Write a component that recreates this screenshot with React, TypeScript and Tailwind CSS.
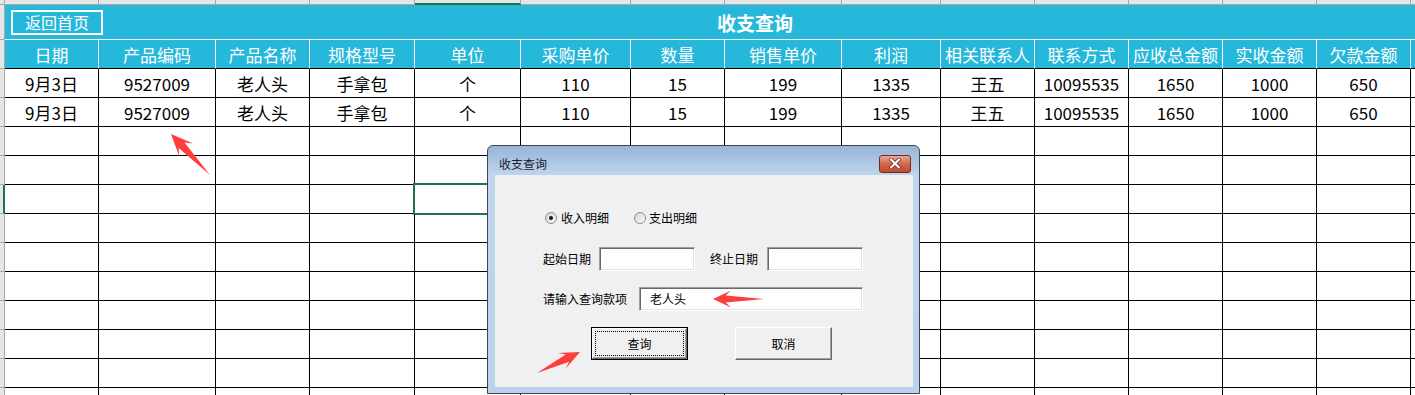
import React from 'react';

const GRID =
  'grid grid-cols-[94px_117px_94px_105px_106px_110px_94px_117px_99px_94px_94px_94px_94px_94px_4px]';

const HEADERS = ['日期', '产品编码', '产品名称', '规格型号', '单位', '采购单价', '数量', '销售单价', '利润', '相关联系人', '联系方式', '应收总金额', '实收金额', '欠款金额'];
const ROW = ['9月3日', '9527009', '老人头', '手拿包', '个', '110', '15', '199', '1335', '王五', '10095535', '1650', '1000', '650'];

const DATA: string[][] = [ROW, ROW, ...Array.from({ length: 10 }, () => Array(14).fill(''))];

// red screenshot arrow, tail -> tip
function arrowPoints(x1: number, y1: number, x2: number, y2: number, hl: number, hh: number, nh: number) {
  const dx = x2 - x1;
  const dy = y2 - y1;
  const len = Math.hypot(dx, dy);
  const ux = dx / len;
  const uy = dy / len;
  const px = -uy;
  const py = ux;
  const at = (u: number, v: number) => `${(x1 + ux * u + px * v).toFixed(1)},${(y1 + uy * u + py * v).toFixed(1)}`;
  return [at(0, 0), at(len - hl * 0.7, nh), at(len - hl, hh), at(len, 0), at(len - hl, -hh), at(len - hl * 0.7, -nh)].join(' ');
}

const RowHead = ({ active = false }: { active?: boolean }) => (
  <div
    className={`w-[5px] shrink-0 bg-[#e6e6e6] border-b border-b-[#a8a8a8] ${
      active ? 'border-r-2 border-r-[#217346]' : 'border-r border-r-[#a8a8a8]'
    }`}
  />
);

const Radio = ({ checked }: { checked: boolean }) => (
  <div className="w-[12px] h-[12px] rounded-full border border-[#8e8f8f] bg-linear-to-br from-[#d4d4d4] to-[#fcfcfc] flex items-center justify-center">
    {checked && <div className="w-[4px] h-[4px] rounded-full bg-[#151515]" />}
  </div>
);

const Field = ({ className, children }: { className: string; children?: React.ReactNode }) => (
  <div
    className={`h-[24px] bg-white border border-t-[#a0a0a0] border-l-[#a0a0a0] border-r-white border-b-white shadow-[inset_1px_1px_0_#696969,inset_-1px_-1px_0_#e3e3e3] flex items-center ${className}`}
  >
    {children}
  </div>
);

const Dialog = () => (
  <div className="absolute left-[487px] top-[145px] w-[433px] h-[249px] rounded-t-[6px] border border-[#3b4656] bg-linear-to-b from-[#98b4d6] via-[#c0d6ee] via-[12%] to-[#bad2ec] flex flex-col pl-[7px] pr-[6px] pb-[6px]">
    <div className="h-[29px] pt-[6px] flex items-center justify-between pl-[4px] pr-[2px]">
      <span className="text-[12px] leading-none text-[#1b2330]">收支查询</span>
      <div className="w-[32px] h-[18px] rounded-[3px] border border-[#6e2b1f] bg-linear-to-b from-[#e9a795] via-[#d2664c] via-[50%] to-[#c34a2e] flex items-center justify-center">
        <svg width="14" height="11" viewBox="0 0 14 11">
          <path d="M3 1.5 L11 9.5 M11 1.5 L3 9.5" stroke="#5a2218" strokeWidth="3.6" strokeLinecap="round" />
          <path d="M3 1.5 L11 9.5 M11 1.5 L3 9.5" stroke="#ffffff" strokeWidth="2.2" strokeLinecap="round" />
        </svg>
      </div>
    </div>

    <div className="flex-1 bg-[#f0f0f0] pl-[48px] pt-[35px] flex flex-col text-[12px] leading-none text-black">
      <div className="h-[16px] ml-[2px] flex items-center">
        <Radio checked />
        <span className="ml-[4px]">收入明细</span>
        <div className="ml-[25px]">
          <Radio checked={false} />
        </div>
        <span className="ml-[3px]">支出明细</span>
      </div>

      <div className="mt-[21px] h-[24px] flex items-center">
        <span>起始日期</span>
        <Field className="ml-[8px] w-[96px]" />
        <span className="ml-[15px]">终止日期</span>
        <Field className="ml-[9px] w-[96px]" />
      </div>

      <div className="mt-[16px] h-[24px] flex items-center">
        <span>请输入查询款项</span>
        <Field className="ml-[12px] w-[224px] pl-[10px]">
          <span>老人头</span>
        </Field>
      </div>

      <div className="mt-[16px] h-[33px] flex">
        <div className="ml-[48px] w-[97px] h-[33px] border border-black">
          <div className="h-full bg-[#f0f0f0] border border-t-white border-l-white border-r-[#696969] border-b-[#696969] shadow-[inset_-1px_-1px_0_#a0a0a0] p-[2px]">
            <div className="h-full border border-dotted border-black flex items-center justify-center">查询</div>
          </div>
        </div>
        <div className="ml-[47px] w-[97px] h-[33px] bg-[#f0f0f0] border border-t-white border-l-white border-r-[#696969] border-b-[#696969] shadow-[inset_-1px_-1px_0_#a0a0a0] flex items-center justify-center">
          取消
        </div>
      </div>
    </div>
  </div>
);

export default function App() {
  return (
    <div className="relative w-[1415px] h-[395px] overflow-hidden bg-white font-['Noto_Sans_CJK_SC',sans-serif]">
      {/* column header strip */}
      <div className="flex h-[5px]">
        <div className="w-[5px] bg-[#e6e6e6] border-r border-b border-[#a8a8a8]" />
        <div className={`${GRID} flex-1`}>
          {HEADERS.map((_, i) => (
            <div
              key={i}
              className={`bg-[#e6e6e6] border-r border-r-[#a8a8a8] ${
                i === 4 ? 'border-b-2 border-b-[#217346]' : 'border-b border-b-[#a8a8a8]'
              }`}
            />
          ))}
          <div className="bg-[#e6e6e6] border-b border-b-[#a8a8a8]" />
        </div>
      </div>

      {/* title band */}
      <div className="flex h-[35px]">
        <RowHead />
        <div className="flex-1 bg-[#26b8da] border-b border-white flex items-center">
          <div className="ml-[6px] w-[92px] h-[25px] border-2 border-white flex items-center justify-center text-[16px] leading-none text-white">
            返回首页
          </div>
          <span className="ml-[614px] text-[19px] font-bold leading-none text-white">收支查询</span>
        </div>
      </div>

      {/* header row */}
      <div className="flex h-[29px]">
        <RowHead />
        <div className={`${GRID} flex-1 bg-[#26b8da]`}>
          {HEADERS.map((h) => (
            <div key={h} className="border-r border-r-white border-b border-b-black flex items-center justify-center text-[17px] leading-none text-white whitespace-nowrap">
              {h}
            </div>
          ))}
          <div className="border-b border-b-black" />
        </div>
      </div>

      {/* data rows */}
      {DATA.map((row, r) => (
        <div key={r} className="flex h-[29px]">
          <RowHead active={r === 4} />
          <div className={`${GRID} flex-1`}>
            {row.map((v, c) => (
              <div key={c} className="border-r border-b border-black flex items-center justify-center text-[17px] leading-none text-black whitespace-nowrap">
                {v}
              </div>
            ))}
            <div className="border-b border-black" />
          </div>
        </div>
      ))}

      {/* selected cell */}
      <div className="absolute left-[413px] top-[183px] w-[109px] h-[32px] border-2 border-[#217346]" />

      <Dialog />

      <svg className="absolute left-0 top-0 pointer-events-none" width="1415" height="395">
        <polygon points={arrowPoints(210, 175, 171, 134, 22, 9.5, 4)} fill="#fe3d3d" />
        <polygon points={arrowPoints(764, 299, 713, 299, 18, 8.5, 3.5)} fill="#fe3d3d" />
        <polygon points={arrowPoints(537, 373, 580, 352, 20, 8.5, 4)} fill="#fe3d3d" />
      </svg>
    </div>
  );
}
